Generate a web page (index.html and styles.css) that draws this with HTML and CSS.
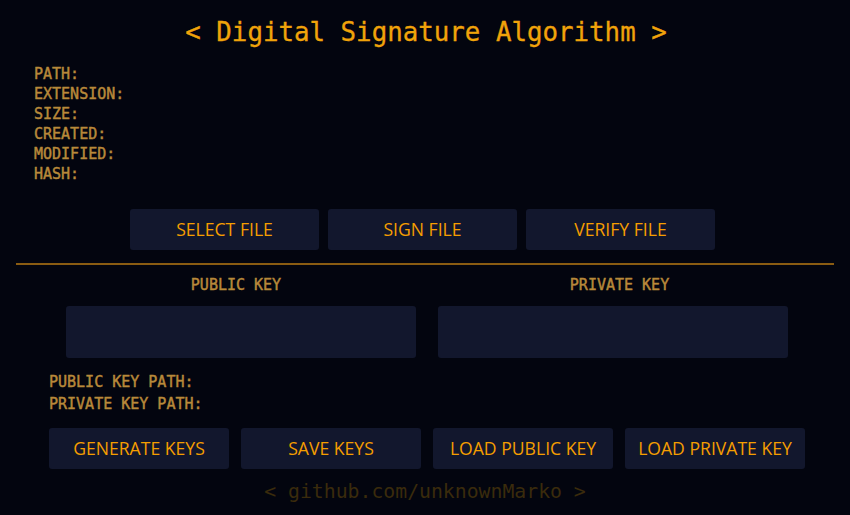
FILE: index.html
```html
<!DOCTYPE html>
<html>
<head>
<meta charset="utf-8">
<link rel="stylesheet" href="styles.css">
</head>
<body>
<div class="app">
  <h1 class="title">&lt; Digital Signature Algorithm &gt;</h1>
  <div class="info">
    <div>PATH:</div>
    <div>EXTENSION:</div>
    <div>SIZE:</div>
    <div>CREATED:</div>
    <div>MODIFIED:</div>
    <div>HASH:</div>
  </div>
  <div class="file-actions">
    <button class="btn btn-file">SELECT FILE</button>
    <button class="btn btn-file">SIGN FILE</button>
    <button class="btn btn-file">VERIFY FILE</button>
  </div>
  <hr class="divider">
  <div class="keys">
    <div class="key-col key-public">
      <div class="key-label">PUBLIC KEY</div>
      <textarea class="key-box"></textarea>
    </div>
    <div class="key-col key-private">
      <div class="key-label">PRIVATE KEY</div>
      <textarea class="key-box"></textarea>
    </div>
  </div>
  <div class="paths">
    <div>PUBLIC KEY PATH:</div>
    <div>PRIVATE KEY PATH:</div>
  </div>
  <div class="key-actions">
    <button class="btn btn-key">GENERATE KEYS</button>
    <button class="btn btn-key">SAVE KEYS</button>
    <button class="btn btn-key">LOAD PUBLIC KEY</button>
    <button class="btn btn-key">LOAD PRIVATE KEY</button>
  </div>
  <div class="footer">&lt; github.com/unknownMarko &gt;</div>
</div>
</body>
</html>
```

FILE: styles.css
```css
html, body {
  margin: 0;
  padding: 0;
  background: #03050f;
  height: 100%;
}
.app {
  width: 850px;
  height: 515px;
  overflow: hidden;
}
.title {
  margin: 16px 0 0 0;
  text-align: center;
  font-family: "DejaVu Sans Mono", monospace;
  font-weight: normal;
  font-size: 25.8px;
  line-height: 32px;
  color: #f0a30a;
  -webkit-text-stroke: 0.3px #f0a30a;
  padding-left: 2px;
}
.info,
.key-label,
.paths {
  font-family: "DejaVu Sans Mono", monospace;
  font-weight: normal;
  font-size: 15px;
  color: #b8893a;
  -webkit-text-stroke: 0.45px #b8893a;
}
.info {
  margin-top: 16px;
  padding-left: 34px;
  line-height: 20px;
}
.file-actions {
  margin-top: 25px;
  display: flex;
  justify-content: center;
  gap: 9px;
  padding-right: 5px;
}
.btn {
  height: 41px;
  border: none;
  border-radius: 3px;
  background: #12172d;
  color: #f59e00;
  font-family: "Open Sans", sans-serif;
  font-weight: 400;
  font-size: 17.6px;
  padding: 0 0 2px 0;
  cursor: pointer;
}
.btn-file {
  width: 189px;
}
.divider {
  margin: 13px 16px 0 16px;
  border: none;
  height: 2px;
  background: #8a5c12;
}
.keys {
  margin-top: 10px;
  display: flex;
}
.key-col {
  display: flex;
  flex-direction: column;
}
.key-public {
  margin-left: 49px;
  width: 374px;
}
.key-private {
  margin-left: 9px;
  width: 375px;
}
.key-label {
  text-align: center;
  line-height: 20px;
}
.key-box {
  margin-top: 11px;
  width: 350px;
  height: 52px;
  box-sizing: border-box;
  border: none;
  border-radius: 3px;
  background: #12172d;
  resize: none;
  outline: none;
}
.key-public .key-box {
  margin-left: 17px;
}
.key-private .key-box {
  margin-left: 6px;
}
.paths {
  margin-top: 13px;
  padding-left: 49px;
  line-height: 22px;
}
.key-actions {
  margin-top: 13px;
  padding-left: 49px;
  display: flex;
  gap: 12px;
}
.btn-key {
  width: 180px;
}
.footer {
  margin-top: 11px;
  text-align: center;
  font-family: "DejaVu Sans Mono", monospace;
  font-size: 19.8px;
  line-height: 24px;
  color: #3a2b0c;
}
```
